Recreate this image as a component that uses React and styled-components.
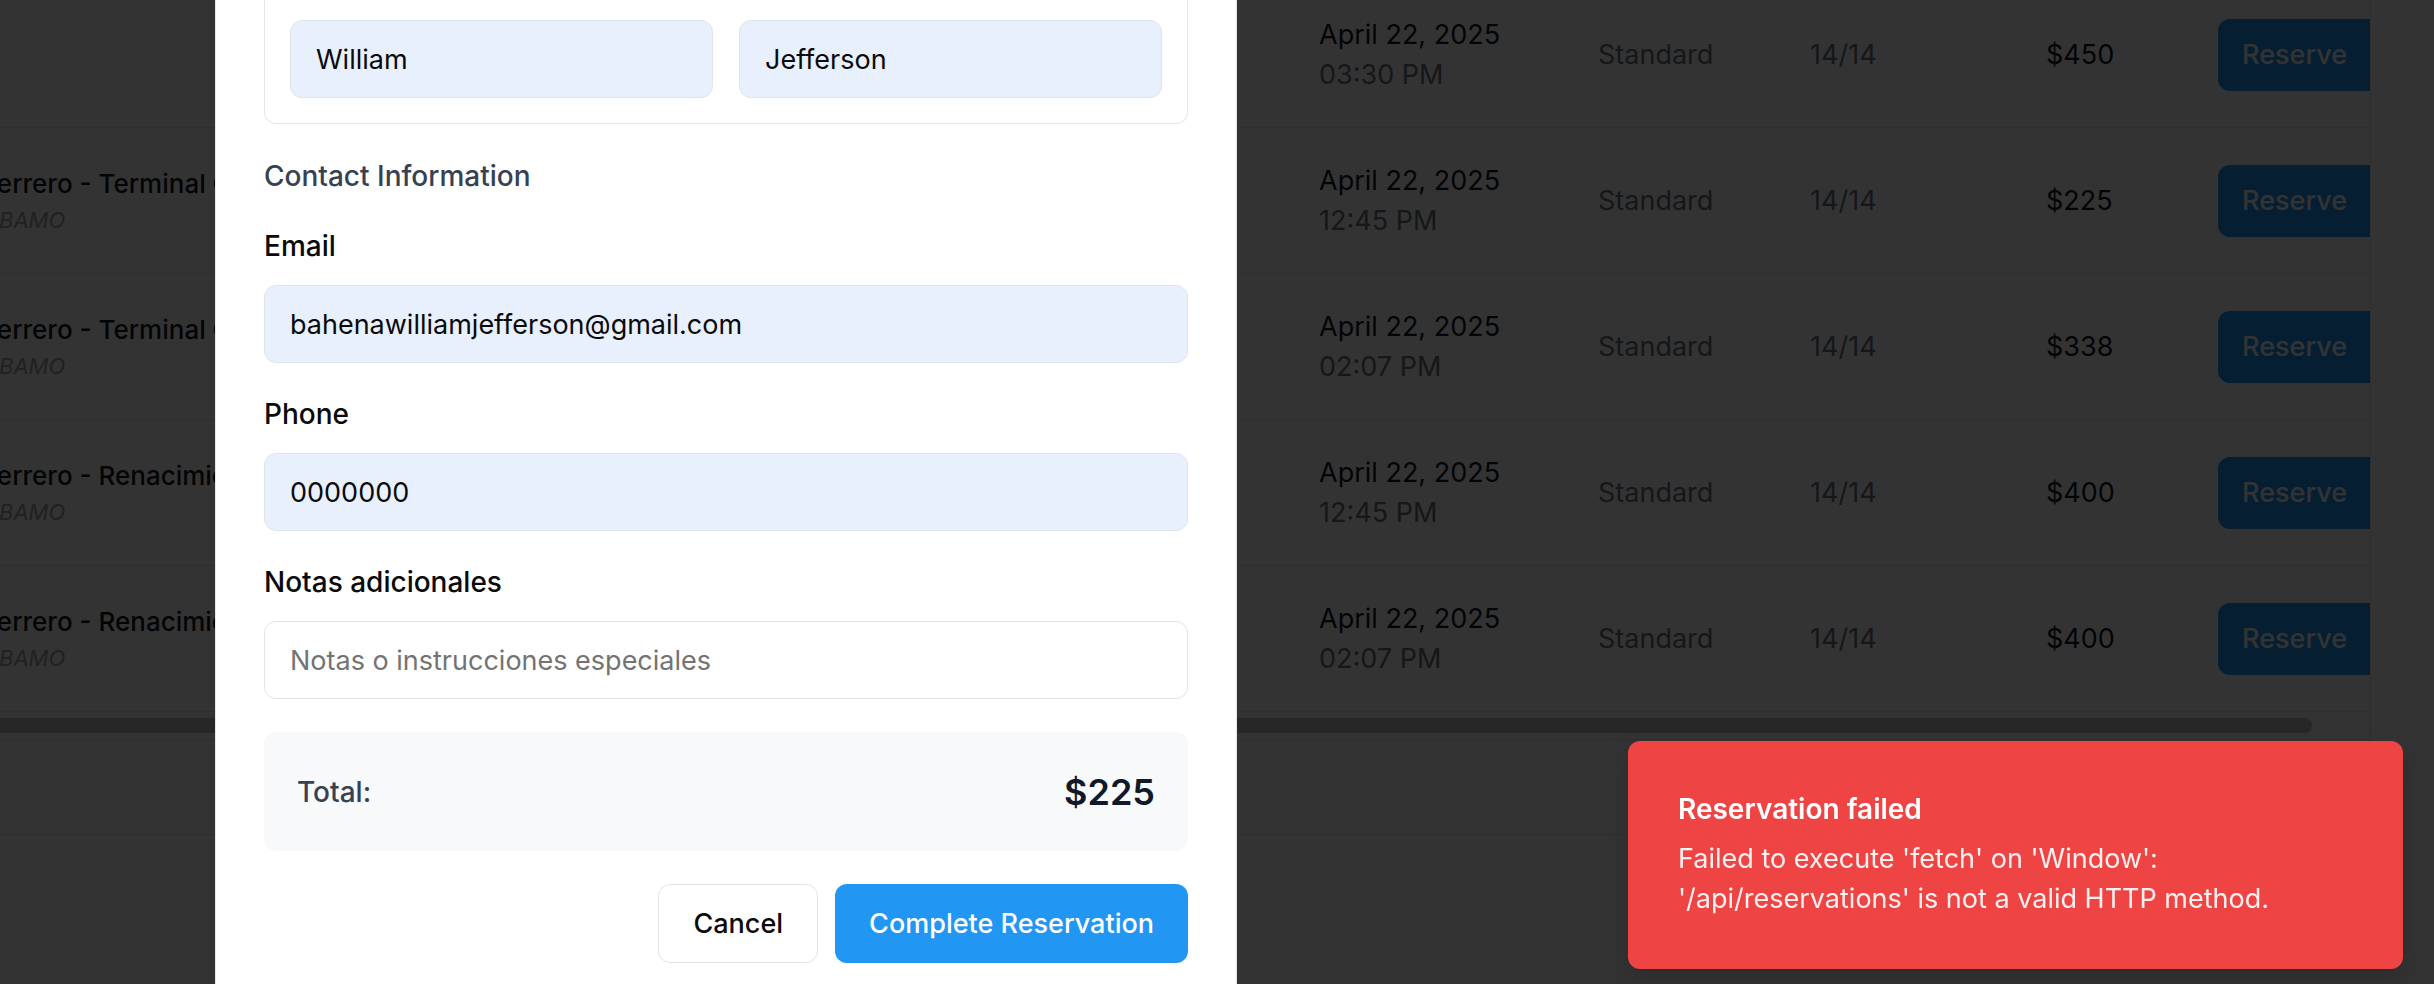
import styled, { createGlobalStyle } from 'styled-components'

const GlobalStyle = createGlobalStyle`
  html, body {
    margin: 0;
    padding: 0;
  }
  body {
    font-family: Inter, "Liberation Sans", sans-serif;
    background: #ffffff;
    color: #111827;
    overflow: hidden;
  }
  * {
    box-sizing: border-box;
  }
`

const trips = [
  { route: 'Acapulco', sub: 'DIRECTO', time: '03:30 PM', price: '$450' },
  { route: 'Acapulco, Guerrero - Terminal Central', sub: 'VÍA ACAPULCO BAMO', time: '12:45 PM', price: '$225' },
  { route: 'Acapulco, Guerrero - Terminal Central', sub: 'VÍA ACAPULCO BAMO', time: '02:07 PM', price: '$338' },
  { route: 'Acapulco, Guerrero - Renacimiento', sub: 'VÍA ACAPULCO BAMO', time: '12:45 PM', price: '$400' },
  { route: 'Acapulco, Guerrero - Renacimiento', sub: 'VÍA ACAPULCO BAMO', time: '02:07 PM', price: '$400' },
]

function TripRow({ trip }) {
  return (
    <Row>
      <Route>
        <RouteName>{trip.route}</RouteName>
        <RouteSub>{trip.sub}</RouteSub>
      </Route>
      <div>
        <DateLine>April 22, 2025</DateLine>
        <TimeLine>{trip.time}</TimeLine>
      </div>
      <Muted>Standard</Muted>
      <Muted>14/14</Muted>
      <Price>{trip.price}</Price>
      <ReserveButton>Reserve</ReserveButton>
    </Row>
  )
}

function Field({ label, value, placeholder }) {
  return (
    <FieldGroup>
      <Label>{label}</Label>
      <Input defaultValue={value} placeholder={placeholder} $filled={!!value} />
    </FieldGroup>
  )
}

export default function App() {
  return (
    <>
      <GlobalStyle />
      <Viewport>
        <TableCard>
          <HeaderRow />
          {trips.map((trip, i) => (
            <TripRow key={i} trip={trip} />
          ))}
          <ScrollArea>
            <ScrollThumb />
          </ScrollArea>
          <Footer />
        </TableCard>
      </Viewport>

      <Overlay />

      <Dialog>
        <PassengerCard>
          <PassengerTitle>Passenger 1</PassengerTitle>
          <NameGrid>
            <Input defaultValue="William" $filled />
            <Input defaultValue="Jefferson" $filled />
          </NameGrid>
        </PassengerCard>

        <SectionTitle>Contact Information</SectionTitle>
        <Field label="Email" value="bahenawilliamjefferson@gmail.com" />
        <Field label="Phone" value="0000000" />
        <Field label="Notas adicionales" placeholder="Notas o instrucciones especiales" />

        <TotalBox>
          <TotalLabel>Total:</TotalLabel>
          <TotalValue>$225</TotalValue>
        </TotalBox>

        <Actions>
          <CancelButton>Cancel</CancelButton>
          <PrimaryButton>Complete Reservation</PrimaryButton>
        </Actions>
      </Dialog>

      <Toast>
        <ToastTitle>Reservation failed</ToastTitle>
        <ToastText>
          Failed to execute 'fetch' on 'Window':
          <br />
          '/api/reservations' is not a valid HTTP method.
        </ToastText>
      </Toast>
    </>
  )
}

/* background page: table of trips, anchored to bottom-right */
const Viewport = styled.div`
  display: flex;
  justify-content: flex-end;
  align-items: flex-end;
  width: 100vw;
  height: 100vh;
  overflow: hidden;
  padding: 0 63px 149px 0;
`
const TableCard = styled.div`
  flex: none;
  display: flex;
  flex-direction: column;
  width: 2573px;
  border-right: 1px solid #e5e7eb;
  border-bottom: 1px solid #e5e7eb;
`
const HeaderRow = styled.div`
  height: 90px;
  border-bottom: 1px solid #e5e7eb;
`
const Row = styled.div`
  display: grid;
  grid-template-columns: 1489px 279px 212px 236px 172px 152px;
  align-items: center;
  height: 146px;
  padding-left: 32px;
  border-bottom: 1px solid #e5e7eb;
`
const Route = styled.div`
  white-space: nowrap;
  overflow: hidden;
`
const RouteName = styled.div`
  font-size: 26px;
  line-height: 38px;
  font-weight: 500;
  color: #111827;
`
const RouteSub = styled.div`
  font-size: 22px;
  line-height: 34px;
  font-style: italic;
  color: #9ca3af;
`
const DateLine = styled.div`
  font-size: 27px;
  line-height: 40px;
  color: #111827;
`
const TimeLine = styled(DateLine)`
  color: #6b7280;
`
const Muted = styled.div`
  font-size: 27px;
  color: #6b7280;
`
const Price = styled.div`
  font-size: 27px;
  color: #111827;
`
const ReserveButton = styled.button`
  height: 72px;
  width: 152px;
  border: none;
  border-radius: 12px 0 0 12px;
  background: #2196f3;
  color: #ffffff;
  font-family: inherit;
  font-size: 27px;
  font-weight: 500;
  text-align: left;
  padding: 0 24px;
`
const ScrollArea = styled.div`
  height: 28px;
  padding: 6px 58px 7px 0;
  border-bottom: 1px solid #e5e7eb;
`
const ScrollThumb = styled.div`
  height: 15px;
  border-radius: 8px;
  background: #c2c2c2;
`
const Footer = styled.div`
  height: 94px;
`

const Overlay = styled.div`
  position: fixed;
  inset: 0;
  background: rgba(0, 0, 0, 0.8);
`

/* reservation dialog */
const Dialog = styled.div`
  position: fixed;
  top: -63px;
  left: 215px;
  width: 1022px;
  display: flex;
  flex-direction: column;
  padding: 0 48px 48px;
  background: #ffffff;
  border: 1px solid #e5e7eb;
`
const PassengerCard = styled.div`
  border: 1px solid #e5e7eb;
  border-top: none;
  border-radius: 0 0 12px 12px;
  padding: 26px 25px 25px;
`
const PassengerTitle = styled.div`
  font-size: 28px;
  line-height: 40px;
  font-weight: 500;
  margin-bottom: 16px;
`
const NameGrid = styled.div`
  display: grid;
  grid-template-columns: 1fr 1fr;
  gap: 26px;
`
const SectionTitle = styled.div`
  margin-top: 32px;
  font-size: 28px;
  line-height: 40px;
  font-weight: 500;
  color: #374151;
`
const FieldGroup = styled.div`
  display: flex;
  flex-direction: column;
  margin-top: 30px;

  & + & {
    margin-top: 31px;
  }
`
const Label = styled.label`
  font-size: 28px;
  line-height: 40px;
  font-weight: 500;
  color: #0a0a0a;
  margin-bottom: 19px;
`
const Input = styled.input`
  height: 78px;
  width: 100%;
  padding: 0 25px;
  border: 1px solid #e2e3e7;
  border-radius: 12px;
  background: ${({ $filled }) => ($filled ? '#e8f0fe' : '#ffffff')};
  font-family: inherit;
  font-size: 27px;
  color: #0a0a0a;
  outline: none;

  &::placeholder {
    color: #737373;
  }
`
const TotalBox = styled.div`
  display: flex;
  justify-content: space-between;
  align-items: center;
  margin-top: 33px;
  height: 119px;
  padding: 0 33px;
  border-radius: 12px;
  background: #f8f9fb;
`
const TotalLabel = styled.div`
  font-size: 28px;
  font-weight: 500;
  color: #374151;
`
const TotalValue = styled.div`
  font-size: 36px;
  font-weight: 600;
  color: #111827;
`
const Actions = styled.div`
  display: flex;
  justify-content: flex-end;
  gap: 17px;
  margin-top: 33px;
`
const BaseButton = styled.button`
  height: 79px;
  padding: 0 34px;
  border-radius: 12px;
  font-family: inherit;
  font-size: 27px;
  font-weight: 500;
`
const CancelButton = styled(BaseButton)`
  background: #ffffff;
  border: 1px solid #e2e3e7;
  color: #0a0a0a;
`
const PrimaryButton = styled(BaseButton)`
  background: #2196f3;
  border: none;
  color: #ffffff;
`

/* error toast */
const Toast = styled.div`
  position: fixed;
  right: 31px;
  bottom: 15px;
  width: 775px;
  padding: 50px;
  border-radius: 12px;
  background: #ef4444;
  color: #ffffff;
  box-shadow: 0 10px 24px rgba(0, 0, 0, 0.15);
`
const ToastTitle = styled.div`
  font-size: 28px;
  line-height: 36px;
  font-weight: 600;
`
const ToastText = styled.div`
  margin-top: 12px;
  font-size: 27px;
  line-height: 40px;
  opacity: 0.92;
`
